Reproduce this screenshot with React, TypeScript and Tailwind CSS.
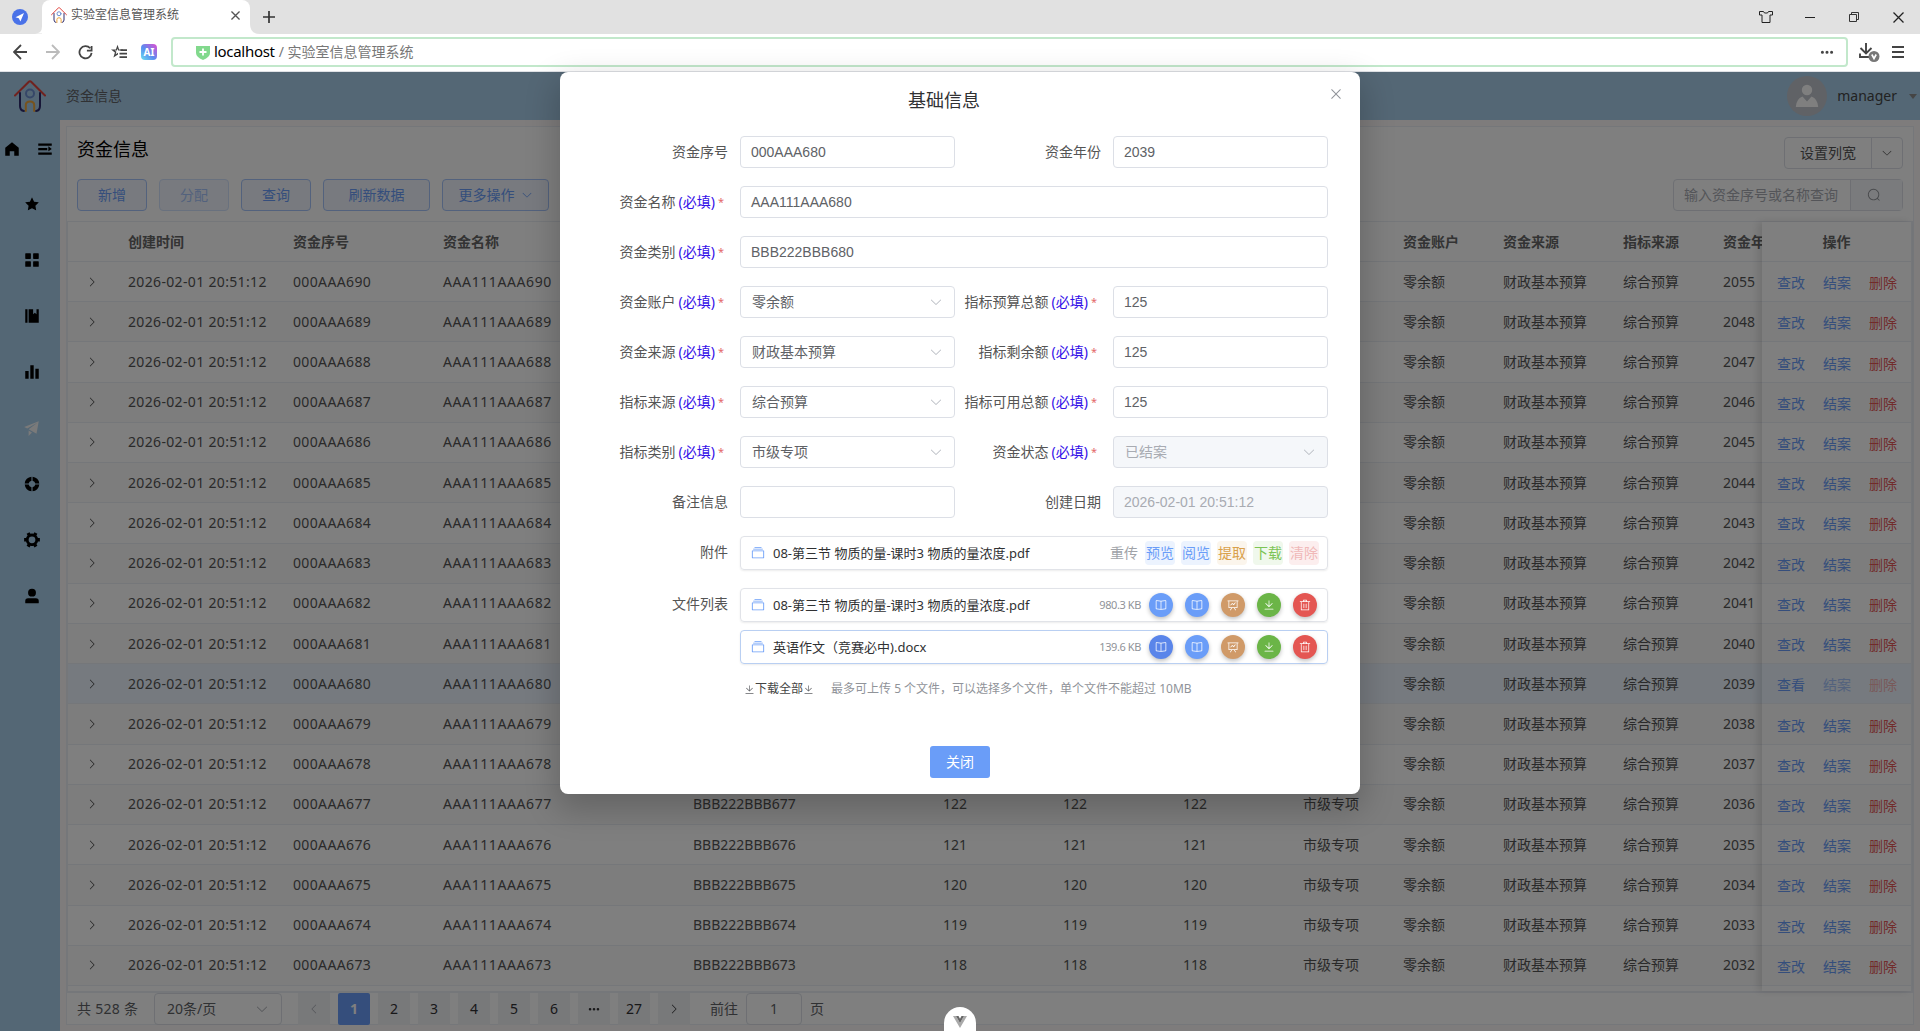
import clsx from "clsx";

const icons = {
  home: "M512 128 128 447.936V896h255.936V640H640v256h255.936V447.936z",
  expand: "M128 192h768v128H128zm0 256h512v128H128zm0 256h768v128H128zm576-352 192 160-192 128z",
  star: "M283.84 867.84 512 747.776l228.16 119.936a6.4 6.4 0 0 0 9.28-6.72l-43.52-254.08 184.512-179.904a6.4 6.4 0 0 0-3.52-10.88l-255.104-37.12L517.76 147.904a6.4 6.4 0 0 0-11.52 0L392.192 379.072l-255.104 37.12a6.4 6.4 0 0 0-3.52 10.88L318.08 606.976l-43.584 254.08a6.4 6.4 0 0 0 9.28 6.72z",
  menu: "M160 448a32 32 0 0 1-32-32V160.064a32 32 0 0 1 32-32h256a32 32 0 0 1 32 32V416a32 32 0 0 1-32 32zm448 0a32 32 0 0 1-32-32V160.064a32 32 0 0 1 32-32h255.936a32 32 0 0 1 32 32V416a32 32 0 0 1-32 32zM160 896a32 32 0 0 1-32-32V608a32 32 0 0 1 32-32h256a32 32 0 0 1 32 32v256a32 32 0 0 1-32 32zm448 0a32 32 0 0 1-32-32V608a32 32 0 0 1 32-32h255.936a32 32 0 0 1 32 32v256a32 32 0 0 1-32 32z",
  management: "M576 128v288l96-96 96 96V128h128v768H320V128zm-448 0h128v768H128z",
  histogram: "M416 896V128h192v768zm-288 0V448h192v448zm576 0V320h192v576z",
  promotion: "m64 448 832-320-128 704-446.08-243.328L832 192 242.816 545.536zm256 512V657.024L512 768z",
  help: "M926.784 480H701.312A192.512 192.512 0 0 0 544 322.688V97.216A416.064 416.064 0 0 1 926.784 480m0 64A416.064 416.064 0 0 1 544 926.784V701.312A192.512 192.512 0 0 0 701.312 544zM97.28 544h225.472A192.512 192.512 0 0 0 480 701.312v225.472A416.064 416.064 0 0 1 97.216 544zm0-64A416.064 416.064 0 0 1 480 97.216v225.472A192.512 192.512 0 0 0 322.688 480H97.216z",
  tools: "M764.416 254.72a351.68 351.68 0 0 1 86.336 149.184H960v192.064H850.752a351.68 351.68 0 0 1-86.336 149.312l54.72 94.72-166.272 96-54.592-94.72a352.64 352.64 0 0 1-172.48 0L371.136 936l-166.272-96 54.72-94.72a351.68 351.68 0 0 1-86.336-149.312H64v-192h109.248a351.68 351.68 0 0 1 86.336-149.312L204.8 160l166.208-96h.192l54.656 94.592a352.64 352.64 0 0 1 172.48 0L652.8 64h.128L819.2 160l-54.72 94.72zM704 499.968a192 192 0 1 0-384 0 192 192 0 0 0 384 0",
  user: "M288 320a224 224 0 1 0 448 0 224 224 0 1 0-448 0m544 608H160a32 32 0 0 1-32-32v-96a160 160 0 0 1 160-160h448a160 160 0 0 1 160 160v96a32 32 0 0 1-32 32z",
  right: "M340.864 149.312a30.592 30.592 0 0 0 0 42.752L652.736 512 340.864 831.872a30.592 30.592 0 0 0 0 42.752 29.12 29.12 0 0 0 41.728 0L714.24 534.336a32 32 0 0 0 0-44.672L382.592 149.376a29.12 29.12 0 0 0-41.728 0z",
  down: "M831.872 340.864 512 652.672 192.128 340.864a30.592 30.592 0 0 0-42.752 0 29.12 29.12 0 0 0 0 41.6L489.664 714.24a32 32 0 0 0 44.672 0l340.288-331.712a29.12 29.12 0 0 0 0-41.728 30.592 30.592 0 0 0-42.752 0z",
  close: "M764.288 214.592 512 466.88 259.712 214.592a31.936 31.936 0 0 0-45.12 45.12L466.752 512 214.528 764.224a31.936 31.936 0 1 0 45.12 45.184L512 557.184l252.288 252.288a31.936 31.936 0 0 0 45.12-45.12L557.12 512.064l252.288-252.352a31.936 31.936 0 1 0-45.12-45.184z",
  search: "m795.904 750.72 124.992 124.928a32 32 0 0 1-45.248 45.248L750.656 795.904a416 416 0 1 1 45.248-45.248zM480 832a352 352 0 1 0 0-704 352 352 0 0 0 0 704",
  download: "M160 832h704a32 32 0 1 1 0 64H160a32 32 0 1 1 0-64m384-253.696 236.288-236.352 45.248 45.248L508.8 704 192 387.2l45.248-45.248L480 584.704V128h64z",
  remove: "M160 256H96a32 32 0 0 1 0-64h256V95.936a32 32 0 0 1 32-32h256a32 32 0 0 1 32 32V192h256a32 32 0 1 1 0 64h-64v672a32 32 0 0 1-32 32H192a32 32 0 0 1-32-32zm448-64v-64H416v64zM224 896h576V256H224zm192-128a32 32 0 0 1-32-32V416a32 32 0 0 1 64 0v320a32 32 0 0 1-32 32m192 0a32 32 0 0 1-32-32V416a32 32 0 0 1 64 0v320a32 32 0 0 1-32 32",
  files: "M128 384v448h768V384zm-32-64h832a32 32 0 0 1 32 32v512a32 32 0 0 1-32 32H96a32 32 0 0 1-32-32V352a32 32 0 0 1 32-32m64-128h704v64H160zm96-128h512v64H256z",
  more: "M176 416a112 112 0 1 1 0 224 112 112 0 0 1 0-224m336 0a112 112 0 1 1 0 224 112 112 0 0 1 0-224m336 0a112 112 0 1 1 0 224 112 112 0 0 1 0-224",
  reading: "m512 863.36 384-54.848v-638.72L525.568 222.72a96 96 0 0 1-27.136 0L128 169.792v638.72zM137.024 106.432l370.432 52.928a32 32 0 0 0 9.088 0l370.432-52.928A64 64 0 0 1 960 169.792v638.72a64 64 0 0 1-54.976 63.36l-388.48 55.488a32 32 0 0 1-9.088 0l-388.48-55.488A64 64 0 0 1 64 808.512v-638.72a64 64 0 0 1 73.024-63.36zM480 192h64v704h-64z",
  board: "M359.168 768H160a32 32 0 0 1-32-32V192H64a32 32 0 0 1 0-64h896a32 32 0 1 1 0 64h-64v544a32 32 0 0 1-32 32H665.216l110.848 192h-73.856L591.36 768H433.024L322.176 960H248.32zM832 192H192v512h640zM342.656 534.656a32 32 0 1 1-45.312-45.312L444.992 341.76l125.44 94.08L679.04 300.032a32 32 0 1 1 49.92 39.936L581.632 524.224 451.008 426.24 342.656 534.592z",
};

type IconName = keyof typeof icons;

function Icon({ name, size = 14, className }: { name: IconName; size?: number; className?: string }) {
  return (
    <svg viewBox="0 0 1024 1024" width={size} height={size} fill="currentColor" className={clsx("shrink-0", className)}>
      <path d={icons[name]} />
    </svg>
  );
}

function Logo({ size }: { size: number }) {
  return (
    <svg viewBox="0 0 32 32" width={size} height={size} fill="none" strokeWidth="2" strokeLinecap="round" className="shrink-0">
      <path d="M1 15.5 14.6 2q1.4-1.4 2.8 0L31 15.5" stroke="#e0443e" />
      <path d="M6 13v13q0 4.5 4 5M26 13v13q0 4.5-4 5" stroke="#2f2c6e" />
      <circle cx="16" cy="13.5" r="4" stroke="#6d8fd0" />
      <path d="M11.8 31v-6q0-3.5 4.2-3.5t4.2 3.5v6" stroke="#eda63c" />
    </svg>
  );
}

const menus: IconName[] = ["star", "menu", "management", "histogram", "promotion", "help", "tools", "user"];

const cols =
  "grid grid-cols-[50px_165px_150px_250px_250px_120px_120px_120px_100px_100px_120px_100px_49px] *:overflow-hidden *:whitespace-nowrap *:pl-2.5";

const rows = Array.from({ length: 18 }, (_, i) => 690 - i);
const years = [2055, 2048, 2047, 2046, 2045, 2044, 2043, 2042, 2041, 2040, 2039, 2038, 2037, 2036, 2035, 2034, 2033, 2032];

function Browser() {
  return (
    <div className="h-[72px] shrink-0 bg-white">
      <div className="flex h-[34px] items-center bg-[#e1e1e1]">
        <div className="ml-3 flex size-4 items-center justify-center rounded-full bg-[#4a72e8]">
          <svg viewBox="0 0 16 16" width="16" height="16" fill="#fff"><path d="M12 4 3.5 8.2l3.3 1.1L8.4 12.6z" /></svg>
        </div>
        <div className="relative ml-[14px] flex h-[34px] w-[208px] items-center rounded-t-lg bg-white pl-[9px]">
          <svg viewBox="0 0 8 8" width="7" height="8" fill="#fff" className="absolute bottom-0 -left-[7px]"><path d="M8 0v8H0q8 0 8-8" /></svg>
          <svg viewBox="0 0 8 8" width="10" height="10" fill="#fff" className="absolute -right-[10px] bottom-0"><path d="M0 0v8h8Q0 8 0 0" /></svg>
          <div className="mb-1 flex items-center gap-1">
            <Logo size={16} />
            <span className="text-xs text-[#555]">实验室信息管理系统</span>
          </div>
          <svg viewBox="0 0 10 10" width="9" height="9" stroke="#555" strokeWidth="1.5" className="mr-[10px] mb-1 ml-auto"><path d="m.5.5 9 9m0-9-9 9" /></svg>
        </div>
        <svg viewBox="0 0 12 12" width="12" height="12" stroke="#333" strokeWidth="1.7" className="ml-[13px]"><path d="M6 0v12M0 6h12" /></svg>
        <div className="mr-4 ml-auto flex items-center">
          <svg viewBox="0 0 14 12" width="14" height="12" fill="none" stroke="#222" className="mr-8"><path d="M.5.5h4l1 1.5h3l1-1.5h4v3.500H11v7.500H3V4H.5z" /></svg>
          <div className="mr-[34px] h-px w-2.5 bg-[#222]" />
          <svg viewBox="0 0 10 10" width="10" height="10" fill="none" stroke="#333" className="mr-[34px]"><path d="M.5 2.500h7v7h-7zM2.500 2.500v-2h7v7h-2" /></svg>
          <svg viewBox="0 0 11 11" width="11" height="11" stroke="#222" strokeWidth="1.300"><path d="m.5.5 10 10m0-10-10 10" /></svg>
        </div>
      </div>
      <div className="flex h-[38px] items-center border-b border-[#dfe1e5] pb-px pl-[13px]">
        <svg viewBox="0 0 14 16" width="14" height="16" fill="none" stroke="#444" strokeWidth="1.800"><path d="M14 8H1M8 1 1 8l7 7" /></svg>
        <svg viewBox="0 0 14 16" width="14" height="16" fill="none" stroke="#bbb" strokeWidth="1.800" className="ml-[19px]"><path d="M0 8h13M6 1l7 7-7 7" /></svg>
        <svg viewBox="0 0 16 16" width="15" height="15" fill="none" stroke="#444" strokeWidth="1.900" className="ml-[18px]"><path d="M13 3.500A6.500 6.500 0 1 0 14.500 8.500M14.500 1v5h-5" /></svg>
        <svg viewBox="0 0 16 16" width="16" height="16" className="ml-[18px]">
          <path d="M6.500.8 4.900 5.500H0l3.900 3L2.400 13.500 7 10.500V8.800L4.700 10.200l.7-2.400-1.700-1.300h2.200l.6-2 .7 2H12V5.500H8.100z" fill="#444" />
          <path d="M9.500 6.200H16M8.500 9.700H16M8.500 13.200H16" stroke="#444" strokeWidth="1.700" />
        </svg>
        <div className="ml-[14px] flex size-4 items-center justify-center rounded bg-[linear-gradient(45deg,#6ce0f0,#5a8df0_45%,#e04cd0)] text-[10px] font-bold text-white">AI</div>
        <div className="ml-[14px] flex h-[30px] w-[1677px] items-center rounded border-2 border-[#c2e8cb] pl-[23px]">
          <svg viewBox="0 0 14 15" width="14" height="15"><path d="M0 1h14v7q0 4-7 7-7-3-7-7z" fill="#82d98d" /><path d="M7 3.500v7M3.500 7h7" stroke="#fff" strokeWidth="1.800" /></svg>
          <span className="ml-1 text-[15px] tracking-[-0.3px] text-black">localhost</span>
          <span className="ml-1 text-sm text-[#777]">/ 实验室信息管理系统</span>
          <Icon name="more" className="mr-3 ml-auto text-[#444]" />
        </div>
        <svg viewBox="0 0 21 20" width="21" height="20" fill="none" stroke="#444" strokeWidth="1.900" className="mt-0.5 ml-[11px]">
          <path d="M7 0v10.500M1.500 5 7 10.500 12.500 5M1 10.500V14h9" />
          <circle cx="15" cy="13.500" r="5.500" fill="#777" stroke="none" />
          <path d="m12.800 11.500 2.200 4 2.200-4" stroke="#fff" strokeWidth="1.600" />
        </svg>
        <svg viewBox="0 0 12 12" width="12" height="12" stroke="#444" strokeWidth="1.800" className="ml-3"><path d="M0 1h12M0 6h12M0 11h12" /></svg>
      </div>
    </div>
  );
}

function PlainButton({ children, className, disabled }: { children: React.ReactNode; className?: string; disabled?: boolean }) {
  return (
    <button
      className={clsx(
        "flex h-8 items-center justify-center gap-1.5 rounded border bg-[#f0f5fe]",
        disabled ? "border-[#d2e2fd] text-[#a6c4fb]" : "border-[#a6c4fb] text-[#6a9df8]",
        className,
      )}
    >
      {children}
    </button>
  );
}

function Table() {
  return (
    <div className="flex h-[772px] border border-b-2 border-[#ebeef5]">
      <div className="relative w-[1694px] overflow-hidden">
        <div className={clsx(cols, "h-10 border-b border-[#ebeef5] leading-[39px] font-bold text-[#666]")}>
          <div />
          <div>创建时间</div>
          <div>资金序号</div>
          <div>资金名称</div>
          <div>资金类别</div>
          <div>指标预算总额</div>
          <div>指标剩余额</div>
          <div>指标可用总额</div>
          <div>指标类别</div>
          <div>资金账户</div>
          <div>资金来源</div>
          <div>指标来源</div>
          <div>资金年份</div>
        </div>
        {rows.map((n, i) => (
          <div
            key={n}
            className={clsx(
              cols,
              "h-[40.22px] items-center border-b border-[#ebeef5] text-[#555]",
              n === 680 ? "bg-[#ecf5ff]" : i % 2 === 1 && "bg-[#fafafa]",
            )}
          >
            <div className="flex justify-center pr-0.5 pl-0!"><Icon name="right" size={12} className="text-[#444]" /></div>
            <div className="tracking-[0.34px]">2026-02-01 20:51:12</div>
            <div className="tracking-[0.36px]">000AAA{n}</div>
            <div className="tracking-[0.6px]">AAA111AAA{n}</div>
            <div>BBB222BBB{n}</div>
            <div>{n - 555}</div>
            <div>{n - 555}</div>
            <div>{n - 555}</div>
            <div>市级专项</div>
            <div>零余额</div>
            <div>财政基本预算</div>
            <div>综合预算</div>
            <div>{years[i]}</div>
          </div>
        ))}
      </div>
      <div className="relative flex-1 border-r border-[#ebeef5] bg-white shadow-[-4px_0_8px_rgba(0,0,0,0.12)]">
        <div className="h-10 border-b border-[#ebeef5] text-center leading-[39px] font-bold text-[#666]">操作</div>
        {rows.map((n, i) => (
          <div
            key={n}
            className={clsx(
              "flex h-[40.22px] items-center gap-[18px] border-b border-[#ebeef5] pt-[3px] pl-[15px] whitespace-nowrap text-[#6a9df8]",
              n === 680 ? "bg-[#ecf5ff]" : i % 2 === 1 && "bg-[#fafafa]",
            )}
          >
            <span>{n === 680 ? "查看" : "查改"}</span>
            <span className={clsx(n === 680 && "text-[#a6c4fb]")}>结案</span>
            <span className={n === 680 ? "text-[#f3b3b3]" : "text-[#e45656]"}>删除</span>
          </div>
        ))}
      </div>
    </div>
  );
}

function Pagination() {
  return (
    <div className="flex h-8 items-center pl-2.5 text-[#606266]">
      <span className="w-[61px] tracking-[0.3px] whitespace-nowrap">共 528 条</span>
      <div className="ml-4 flex h-8 w-32 items-center justify-between rounded border border-[#dcdfe6] px-3">
        20条/页
        <Icon name="down" className="text-[#a8abb2]" />
      </div>
      <div className="ml-4 flex gap-2 text-[#303133] *:flex *:size-8 *:items-center *:justify-center *:bg-[#f0f2f5]">
        <div><Icon name="right" size={12} className="rotate-180 text-[#a8abb2]" /></div>
        <div className="rounded-xs bg-[#6a9df8]! font-bold text-white">1</div>
        <div>2</div>
        <div>3</div>
        <div>4</div>
        <div>5</div>
        <div>6</div>
        <div><Icon name="more" size={12} /></div>
        <div>27</div>
        <div><Icon name="right" size={12} /></div>
      </div>
      <span className="ml-5">前往</span>
      <div className="ml-2 flex h-8 w-14 items-center justify-center rounded border border-[#dcdfe6]">1</div>
      <span className="ml-2">页</span>
    </div>
  );
}

function Label({ text, required }: { text: string; required?: boolean }) {
  return (
    <div className="flex h-8 shrink-0 items-center justify-end pr-3 whitespace-nowrap text-[#555]">
      {text}
      {required && (
        <>
          <span className="ml-[3px] text-[#3410e8]">(必填)</span>
          <span className="mr-1 ml-[3px] text-[11px] text-[#e46a6a]">*</span>
        </>
      )}
    </div>
  );
}

function Field({ label, value, required, select, disabled, wide }: { label: string; value?: string; required?: boolean; select?: boolean; disabled?: boolean; wide?: boolean }) {
  return (
    <>
      <Label text={label} required={required} />
      <div
        className={clsx(
          "flex h-8 items-center justify-between rounded border border-[#dcdfe6] pr-2.5 font-['Liberation_Sans','Noto_Sans_CJK_SC',sans-serif]",
          wide && "col-span-3",
          select ? "pl-[11px]" : "pl-2.5",
          disabled ? "bg-[#f5f7fa] text-[#a8abb2]" : "text-[#606266]",
        )}
      >
        {value}
        {select && <Icon name="down" className="mr-px text-[#b4b8bf]" />}
      </div>
    </>
  );
}

const tags = [
  { text: "重传", cls: "text-[#a0a3a8]" },
  { text: "预览", cls: "bg-[#ecf3fe] text-[#6a9df8]" },
  { text: "阅览", cls: "bg-[#ecf3fe] text-[#6a9df8]" },
  { text: "提取", cls: "bg-[#fbf5ec] text-[#d9a04a]" },
  { text: "下载", cls: "bg-[#f0f8ec] text-[#7cc455]" },
  { text: "清除", cls: "bg-[#fceeee] text-[#f0b8b8]" },
];

function FileRow({ name, size, active }: { name: string; size?: string; active?: boolean }) {
  return (
    <div className={clsx("flex h-[34px] items-center rounded border pr-2.5 pl-2.5 shadow-[0_1px_2px_rgba(0,0,0,0.08)]", active ? "border-[#b9cff2]" : "border-[#e1e3e8]")}>
      <Icon name="files" className="text-[#6a9df8]" />
      <span className="ml-2 text-[13px] text-[#303133]">{name}</span>
      {size ? (
        <>
          <span className="mr-2 ml-auto text-[11px] tracking-[-0.4px] text-[#909399]">{size}</span>
          <div className="flex gap-3 text-white *:flex *:size-6 *:items-center *:justify-center *:rounded-full *:shadow-[0_2px_4px_rgba(0,0,0,0.25)]">
            <div className={active ? "bg-[#5a85ea]" : "bg-[#6a9df8]"}><Icon name="reading" size={12} /></div>
            <div className="bg-[#6a9df8]"><Icon name="reading" size={12} /></div>
            <div className="bg-[#d09a68]"><Icon name="board" size={12} /></div>
            <div className="bg-[#6bb547]"><Icon name="download" size={12} /></div>
            <div className="bg-[#e45652]"><Icon name="remove" size={12} /></div>
          </div>
        </>
      ) : (
        <div className="-mr-0.5 ml-auto flex gap-1.5">
          {tags.map((t) => (
            <span key={t.text} className={clsx("flex h-6 w-[30px] items-center justify-center rounded", t.cls)}>{t.text}</span>
          ))}
        </div>
      )}
    </div>
  );
}

function Dialog() {
  return (
    <div className="relative h-[722px] w-[800px] rounded-lg bg-white pt-3.5 shadow-[0_12px_32px_4px_rgba(0,0,0,0.2)]">
      <div className="pr-8 text-center text-lg leading-7 text-[#303133]">基础信息</div>
      <Icon name="close" size={16} className="absolute top-3.5 right-4 text-[#909399]" />
      <div className="mt-[22px] mr-8 grid grid-cols-[180px_215px_158px_215px] gap-y-[18px]">
        <Field label="资金序号" value="000AAA680" />
        <Field label="资金年份" value="2039" />
        <Field label="资金名称" value="AAA111AAA680" required wide />
        <Field label="资金类别" value="BBB222BBB680" required wide />
        <Field label="资金账户" value="零余额" required select />
        <Field label="指标预算总额" value="125" required />
        <Field label="资金来源" value="财政基本预算" required select />
        <Field label="指标剩余额" value="125" required />
        <Field label="指标来源" value="综合预算" required select />
        <Field label="指标可用总额" value="125" required />
        <Field label="指标类别" value="市级专项" required select />
        <Field label="资金状态" value="已结案" required select disabled />
        <Field label="备注信息" />
        <Field label="创建日期" value="2026-02-01 20:51:12" disabled />
        <Label text="附件" />
        <div className="col-span-3">
          <FileRow name="08-第三节 物质的量-课时3 物质的量浓度.pdf" />
        </div>
        <Label text="文件列表" />
        <div className="col-span-3 flex flex-col gap-2">
          <FileRow name="08-第三节 物质的量-课时3 物质的量浓度.pdf" size="980.3 KB" />
          <FileRow name="英语作文（竞赛必中).docx" size="139.6 KB" active />
          <div className="mt-[9px] flex items-center pl-1 text-xs">
            <Icon name="download" size={11} className="text-[#606266]" />
            <span className="text-[#444]">下载全部</span>
            <Icon name="download" size={11} className="text-[#606266]" />
            <span className="ml-[17px] text-[#909399]">最多可上传 5 个文件，可以选择多个文件，单个文件不能超过 10MB</span>
          </div>
        </div>
      </div>
      <button className="absolute bottom-4 left-[370px] h-8 w-[60px] rounded-[3px] bg-[#6a9df8] text-white">关闭</button>
    </div>
  );
}

export default function App() {
  return (
    <div className="flex h-[1031px] w-[1920px] flex-col overflow-hidden font-['Noto_Sans','Noto_Sans_CJK_SC',sans-serif] text-sm">
      <Browser />
      <div className="relative h-[959px] bg-white">
        <div className="flex h-12 items-center bg-[#a8ceea] pl-3.5">
          <Logo size={32} />
          <span className="ml-5 text-[#606266]">资金信息</span>
          <div className="ml-auto flex size-10 items-center justify-center rounded-full bg-[#c0c4cc]">
            <svg viewBox="0 0 24 24" width="24" height="24" fill="#fff"><circle cx="12" cy="6" r="5.200" /><path d="M.8 23q.4-8 6.700-10.500L12 17.500l4.500-5Q22.800 15 23.200 23z" /></svg>
          </div>
          <span className="ml-2.5 text-[#444]">manager</span>
          <div className="mr-[3px] ml-3 border-x-[4.5px] border-t-[5px] border-x-transparent border-t-[#8a8a8a]" />
        </div>
        <div className="flex h-[911px]">
          <div className="w-[60px] bg-[#a8ceea] pt-5 text-black">
            <div className="flex justify-between pr-1.5 pl-[3px]">
              <Icon name="home" size={18} />
              <Icon name="expand" size={18} />
            </div>
            <div className="mt-[37px] flex flex-col gap-[38px] pl-[23px]">
              {menus.map((m) => (
                <Icon key={m} name={m} size={18} className={m === "promotion" ? "text-[#f4f4f4]" : undefined} />
              ))}
            </div>
          </div>
          <div className="flex-1 bg-[#fdf9f9] p-1.5">
            <div className="h-[899px] border border-[#ebeef5] bg-white">
              <div className="flex h-[94px] flex-col px-2.5 pt-2.5">
                <div className="flex justify-between">
                  <span className="text-lg leading-6 text-black">资金信息</span>
                  <div className="flex h-8 rounded border border-[#dcdfe6] text-[#555]">
                    <div className="flex w-[86px] items-center justify-center">设置列宽</div>
                    <div className="flex w-[31px] items-center justify-center border-l border-[#dcdfe6]"><Icon name="down" size={12} /></div>
                  </div>
                </div>
                <div className="mt-2.5 flex gap-3">
                  <PlainButton className="w-[70px]">新增</PlainButton>
                  <PlainButton className="w-[70px]" disabled>分配</PlainButton>
                  <PlainButton className="w-[70px]">查询</PlainButton>
                  <PlainButton className="w-[107px]">刷新数据</PlainButton>
                  <PlainButton className="w-[107px]">更多操作<Icon name="down" size={12} /></PlainButton>
                  <div className="ml-auto flex h-8 rounded border border-[#dcdfe6]">
                    <div className="flex w-[176px] items-center pl-2.5 text-[#a8abb2]">输入资金序号或名称查询</div>
                    <div className="flex w-[52px] items-center justify-center border-l border-[#dcdfe6] bg-[#f5f7fa] pr-1.5 text-[#909399]"><Icon name="search" /></div>
                  </div>
                </div>
              </div>
              <Table />
              <Pagination />
            </div>
          </div>
        </div>
        <div className="absolute inset-0 flex items-start justify-center bg-black/50">
          <Dialog />
        </div>
        <div className="absolute bottom-0 left-[944px] flex h-6 w-8 justify-center rounded-t-full bg-white pt-[9px]">
          <svg viewBox="0 0 14 12" width="14" height="12"><path d="M0 0h3l4 7 4-7h3L7 12z" fill="#aaa" /><path d="M3 0h2.500L7 2.700 8.500 0H11L7 7z" fill="#666" /></svg>
        </div>
      </div>
    </div>
  );
}
